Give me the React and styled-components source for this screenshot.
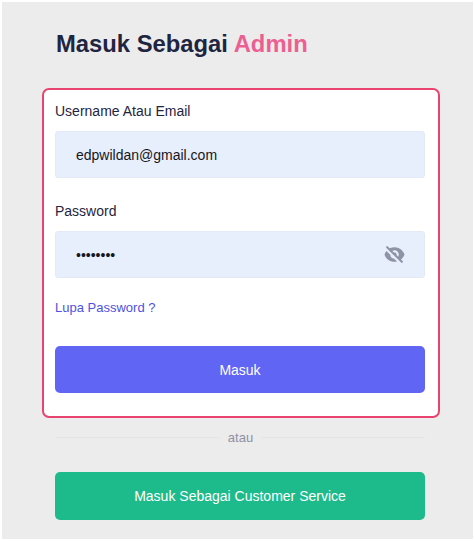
import React from "react";
import styled, { createGlobalStyle } from "styled-components";
import { HiEyeOff } from "react-icons/hi";

const GlobalStyle = createGlobalStyle`
  html, body {
    margin: 0;
    padding: 0;
    background-color: #fff;
    font-family: "Liberation Sans", Arial, sans-serif;
  }
`;

const Page = styled.div`
  box-sizing: border-box;
  width: 474px;
  height: 541px;
  padding: 2px 1px 2px 2px;
`;

const Surface = styled.main`
  box-sizing: border-box;
  height: 100%;
  padding: 26px 34px 0 40px;
  background-color: #ececec;
`;

const Title = styled.h1`
  margin: 0 0 29px 14px;
  height: 31px;
  font-size: 23.8px;
  line-height: 31px;
  font-weight: 700;
  color: #1f2540;

  span {
    color: #ec5f92;
  }
`;

const Card = styled.form`
  box-sizing: border-box;
  width: 398px;
  height: 330px;
  padding: 12px 12px 0 11px;
  background-color: #fff;
  border: 2px solid #e8446f;
  border-radius: 7px;
`;

const Field = styled.div`
  margin-bottom: 24px;
`;

const Label = styled.label`
  display: block;
  height: 18px;
  margin-bottom: 11px;
  font-size: 14px;
  line-height: 18px;
  color: #1f2540;
`;

const InputBox = styled.div`
  box-sizing: border-box;
  display: flex;
  align-items: center;
  justify-content: space-between;
  width: 370px;
  height: 47px;
  padding: 0 19px 0 20px;
  background-color: #e8effc;
  border: 1px solid #e3e9f5;
  border-radius: 3px;
`;

const Input = styled.input`
  flex: 1;
  min-width: 0;
  padding: 0;
  border: 0;
  outline: 0;
  background: transparent;
  font-family: inherit;
  font-size: 14px;
  color: #15161c;
`;

const EyeIcon = styled(HiEyeOff)`
  flex: none;
  width: 21px;
  height: 21px;
  color: #8f93a6;
`;

const ForgotLink = styled.a`
  display: block;
  margin-top: -3px;
  height: 18px;
  font-size: 13px;
  line-height: 18px;
  color: #4f52e0;
  text-decoration: none;
`;

const ActionButton = styled.button`
  display: block;
  box-sizing: border-box;
  width: 370px;
  height: ${(props) => props.$height}px;
  padding: 0;
  border: 0;
  border-radius: 5px;
  background-color: ${(props) => props.$color};
  color: #fff;
  font-family: inherit;
  font-size: 14px;
`;

const SubmitRow = styled.div`
  margin-top: 29px;
`;

const Divider = styled.div`
  display: flex;
  align-items: center;
  gap: 9px;
  width: 369px;
  height: 16px;
  margin: 11px 0 27px 14px;
  font-size: 13px;
  color: #8f90a3;

  &::before,
  &::after {
    content: "";
    flex: 1;
    height: 1px;
    background-color: #e4e4e6;
  }
`;

const Secondary = styled.div`
  margin-left: 13px;
`;

export default function App() {
  return (
    <Page>
      <GlobalStyle />
      <Surface>
        <Title>
          Masuk Sebagai <span>Admin</span>
        </Title>
        <Card onSubmit={(ev) => ev.preventDefault()}>
          <Field>
            <Label>Username Atau Email</Label>
            <InputBox>
              <Input type="text" defaultValue="edpwildan@gmail.com" />
            </InputBox>
          </Field>
          <Field>
            <Label>Password</Label>
            <InputBox>
              <Input type="password" defaultValue="password" />
              <EyeIcon />
            </InputBox>
          </Field>
          <ForgotLink href="#">Lupa Password ?</ForgotLink>
          <SubmitRow>
            <ActionButton $color="#6065f4" $height={47}>
              Masuk
            </ActionButton>
          </SubmitRow>
        </Card>
        <Divider>atau</Divider>
        <Secondary>
          <ActionButton type="button" $color="#1dba8b" $height={48}>
            Masuk Sebagai Customer Service
          </ActionButton>
        </Secondary>
      </Surface>
    </Page>
  );
}
